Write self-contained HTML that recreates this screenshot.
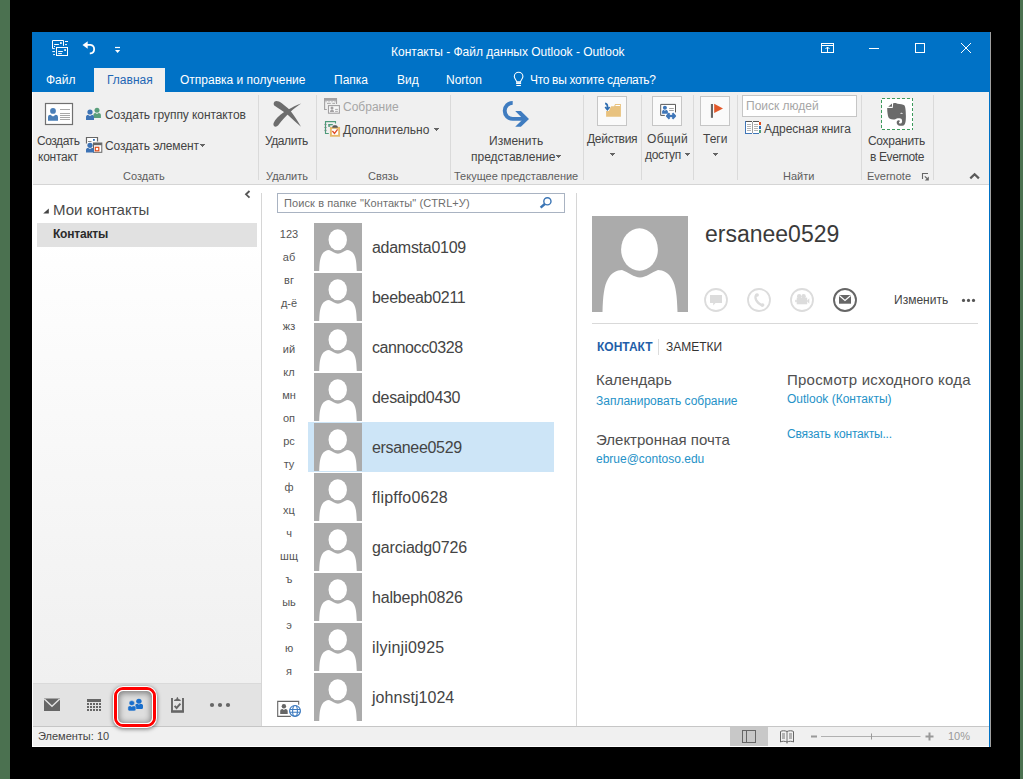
<!DOCTYPE html>
<html><head><meta charset="utf-8">
<style>
*{margin:0;padding:0;box-sizing:border-box}
html,body{width:1023px;height:779px;overflow:hidden;background:#000;font-family:"Liberation Sans",sans-serif;color:#444}
.a{position:absolute}
.t{position:absolute;white-space:nowrap;line-height:1}
svg{position:absolute;overflow:visible}
.gl{font-size:11px;color:#5e5e5e}
.rt{font-size:12px;color:#444}
.rtd{color:#a6a6a6}
.bx{width:30px;height:30px;border:1px solid #c6c6c6;background:#fafafa}
.nm{font-size:16px;color:#444}
.ix{font-size:11px;color:#555;width:40px;text-align:center}
.lk{font-size:12px;color:#2592c8}
#win{position:absolute;left:32px;top:32px;width:959px;height:715px;background:#fff}
</style></head><body>
<div class="a" style="left:0;top:0;width:10px;height:779px;background:#4b7150"></div>
<div class="a" style="left:1020px;top:0;width:3px;height:779px;background:#4b7150"></div>

<!-- window -->
<div class="a" style="left:32px;top:32px;width:958px;height:715px;background:#fff"></div>
<!-- title bar + tabs -->
<div class="a" style="left:32px;top:32px;width:958px;height:60px;background:#0072c6"></div>
<div class="a" style="left:989px;top:32px;width:1px;height:715px;background:#0072c6"></div>
<div class="a" style="left:990px;top:32px;width:1px;height:715px;background:#a0a0a0"></div>

<!-- QAT icons -->
<svg style="left:48px;top:36px" width="24" height="24" viewBox="0 0 24 24" fill="none" stroke="#fff" stroke-width="1">
<path d="M6.8,12.6 H4.5 V4.5 H15.5 V9.9"/>
<rect x="12" y="6.2" width="1.8" height="1.7" fill="#fff" stroke="none"/>
<path d="M6.2,8.5 H10.9 M6,10.5 H7 M17,5.5 H20 M17,8.6 H19 M4.3,15.6 H7 M5.1,18.6 H7"/>
<rect x="8.5" y="11.5" width="11" height="8" />
<rect x="16.2" y="13.2" width="1.8" height="1.7" fill="#fff" stroke="none"/>
<path d="M10.2,15.5 H14.8 M10.2,17.6 H13.9"/>
</svg>
<svg style="left:76px;top:36px" width="48" height="24" viewBox="0 0 48 24" fill="none" stroke="#fff">
<path d="M8,8.9 H14.5 A4.3,4.3 0 0 1 14.5,17.4 H13.8" stroke-width="1.8"/>
<path d="M11.7,5.2 L6.5,8.9 L11.7,12.7 Z" fill="#fff" stroke="none"/>
<path d="M39,11.5 H44" stroke-width="1.2"/>
<path d="M39,14 H44.2 L41.6,16.9 Z" fill="#fff" stroke="none"/>
</svg>

<div class="t" style="left:391px;top:46px;font-size:12px;color:#fff">Контакты - Файл данных Outlook - Outlook</div>

<!-- window controls -->
<svg style="left:815px;top:38px" width="170" height="20" viewBox="0 0 170 20" fill="none" stroke="#fff" stroke-width="1">
<rect x="6.5" y="5.5" width="12" height="9"/>
<path d="M6.5,7.5 H18.5 M12.5,9 V14 M10.5,11 L12.5,9 L14.5,11"/>
<path d="M54,10.5 H64"/>
<rect x="100.5" y="5.5" width="9" height="9"/>
<path d="M146,5 L156,15 M156,5 L146,15"/>
</svg>

<!-- tabs -->
<div class="a" style="left:94px;top:68px;width:71px;height:24px;background:#f0f0f0"></div>
<div class="t" style="left:46px;top:74px;font-size:12px;color:#fff">Файл</div>
<div class="t" style="left:107px;top:74px;font-size:12px;color:#1e66b4">Главная</div>
<div class="t" style="left:180px;top:74px;font-size:12px;color:#fff">Отправка и получение</div>
<div class="t" style="left:334px;top:74px;font-size:12px;color:#fff">Папка</div>
<div class="t" style="left:397px;top:74px;font-size:12px;color:#fff">Вид</div>
<div class="t" style="left:446px;top:74px;font-size:12px;color:#fff">Norton</div>
<svg style="left:510px;top:70px" width="16" height="18" viewBox="0 0 16 18" fill="none" stroke="#fff" stroke-width="1.1">
<path d="M6.8,11.9 C6.6,10.2 4.3,8.8 4.3,6.6 A4.3,4.3 0 0 1 12.9,6.6 C12.9,8.8 10.6,10.2 10.4,11.9 Z"/>
<rect x="6.1" y="12.3" width="5" height="1.7" fill="#fff" stroke="none"/>
<path d="M6.3,15.5 H10.9"/>
</svg>
<div class="t" style="left:530px;top:74px;font-size:12px;color:#fff;letter-spacing:-0.32px">Что вы хотите сделать?</div>

<!-- ribbon -->
<div class="a" style="left:33px;top:92px;width:956px;height:92px;background:#f0f0f0"></div>
<div class="a" style="left:33px;top:184px;width:956px;height:1px;background:#d5d5d5"></div>


<!-- group separators -->
<div class="a" style="left:258px;top:95px;width:1px;height:85px;background:#dadada"></div>
<div class="a" style="left:316px;top:95px;width:1px;height:85px;background:#dadada"></div>
<div class="a" style="left:450px;top:95px;width:1px;height:85px;background:#dadada"></div>
<div class="a" style="left:583px;top:95px;width:1px;height:85px;background:#dadada"></div>
<div class="a" style="left:641px;top:95px;width:1px;height:85px;background:#dadada"></div>
<div class="a" style="left:693px;top:95px;width:1px;height:85px;background:#dadada"></div>
<div class="a" style="left:737px;top:95px;width:1px;height:85px;background:#dadada"></div>
<div class="a" style="left:861px;top:95px;width:1px;height:85px;background:#dadada"></div>
<div class="a" style="left:933px;top:95px;width:1px;height:85px;background:#dadada"></div>

<!-- group labels -->
<div class="t gl" style="left:123px;top:171px">Создать</div>
<div class="t gl" style="left:266px;top:171px">Удалить</div>
<div class="t gl" style="left:368px;top:171px">Связь</div>
<div class="t gl" style="left:454px;top:171px">Текущее представление</div>
<div class="t gl" style="left:783px;top:171px">Найти</div>
<div class="t gl" style="left:867px;top:171px">Evernote</div>

<!-- Создать group -->
<svg style="left:44px;top:102px" width="30" height="24" viewBox="0 0 30 24">
<rect x="1.5" y="1.5" width="27" height="21" fill="#fff" stroke="#707070" stroke-width="1.2"/>
<circle cx="9" cy="8.9" r="2.9" fill="#4a7fb8"/>
<path d="M4,18.7 V15.3 C4,13.6 5,12.8 6.3,12.8 L9,14.6 L11.7,12.8 C13,12.8 14,13.6 14,15.3 V18.7 Z" fill="#4a7fb8"/>
<path d="M16,7.5 H26 M16,11.5 H26 M16,13.5 H26 M16,15.5 H26 M16,17.5 H26" stroke="#a8a8a8" stroke-width="1"/>
</svg>
<div class="t rt" style="left:37px;top:135px;letter-spacing:-0.45px">Создать</div>
<div class="t rt" style="left:38px;top:151px;letter-spacing:-0.25px">контакт</div>

<svg style="left:82px;top:102px" width="24" height="24" viewBox="0 0 24 24">
<circle cx="15" cy="8.2" r="2.5" fill="#5a9e7a"/>
<path d="M11.4,15.9 V13 C11.4,11.6 12.3,10.9 13.3,10.9 L15,12 L16.7,10.9 C17.8,10.9 18.9,11.6 18.9,13 V15.9 Z" fill="#5a9e7a"/>
<circle cx="8" cy="10" r="2.6" fill="#3d73b5"/>
<path d="M4,17.9 V14.9 C4,13.5 5,12.9 6.1,12.9 L8,14 L9.9,12.9 C11,12.9 12,13.5 12,14.9 V17.9 Z" fill="#3d73b5"/>
</svg>
<div class="t rt" style="left:105px;top:109px;letter-spacing:-0.08px">Создать группу контактов</div>

<svg style="left:82px;top:133px" width="24" height="24" viewBox="0 0 24 24">
<path d="M4.5,10.5 V4.5 H15.5 V8.5" fill="#fff" stroke="#666" stroke-width="1.2"/>
<rect x="11" y="6" width="1.8" height="1.8" fill="#2d6db5"/>
<path d="M6,8.5 H9.5" stroke="#888" stroke-width="1"/>
<rect x="11.5" y="10" width="8.3" height="9.3" fill="#fff" stroke="#666" stroke-width="1"/>
<rect x="11.5" y="10" width="8.3" height="2.2" fill="#666"/>
<rect x="13.3" y="14.3" width="3.5" height="3.5" fill="none" stroke="#e04e1b" stroke-width="1.2"/>
<circle cx="8" cy="12.3" r="2.6" fill="#3d73b5"/>
<path d="M4,19.6 V16.9 C4,15.6 5,15 6.1,15 L8,16 L9.9,15 C11,15 12,15.6 12,16.9 V19.6 Z" fill="#3d73b5"/>
</svg>
<div class="t rt" style="left:105px;top:140px;letter-spacing:-0.1px">Создать элемент</div>
<svg style="left:200px;top:144px" width="5" height="3" viewBox="0 0 5 3" shape-rendering="crispEdges"><path d="M0,0 H5 V1 H4 V2 H3 V3 H2 V2 H1 V1 H0 Z" fill="#646464"/></svg>

<!-- Удалить -->
<svg style="left:268px;top:96px" width="38" height="36" viewBox="0 0 38 36">
<path d="M8.5,4.9 C11.5,4.9 16,8.5 20,12.3 C23,15 28,22 33,30.8 C29,27.5 24,22.5 19.4,18.5 C15,15 10,12 7,10 C4.8,8.5 5.5,4.9 8.5,4.9 Z" fill="#6d6d6d"/>
<path d="M33.2,7.5 C28.5,9 24,11.5 20.3,13.6 L15.8,16.2 C11,19.5 7,23.5 5.6,27 C4.8,29.5 6.5,31 8.3,30.6 C9.3,30.3 10,29.5 11,28.2 C14,24.5 17.5,20.5 22.8,15.5 C26,12.5 30,9.5 33.2,7.5 Z" fill="#6d6d6d"/>
</svg>
<div class="t rt" style="left:265px;top:135px;letter-spacing:-0.43px">Удалить</div>

<!-- Связь -->
<svg style="left:320px;top:94px" width="24" height="24" viewBox="0 0 24 24" fill="none">
<path d="M6.8,15.5 H4.6 V4.5 H16.5 V9.9" stroke="#a3a1a3" stroke-width="1.1"/>
<rect x="4.1" y="4" width="12.9" height="2.8" fill="#a3a1a3"/>
<path d="M5.5,7.7 H6.5 M8.5,7.7 H9.5 M11.5,7.7 H12.5 M14.5,7.7 H15.5 M7,9.4 H10.8 M12.3,9.4 H15" stroke="#a3a1a3" stroke-width="0.9"/>
<rect x="8.5" y="11.6" width="10.9" height="7.6" fill="#f8f8f8" stroke="#a3a1a3" stroke-width="1.1"/>
<circle cx="12" cy="14" r="1.5" fill="#a3a1a3"/>
<path d="M10,18 C10,16.3 10.8,15.8 12,15.8 C13.2,15.8 14,16.3 14,18 Z" fill="#a3a1a3"/>
<path d="M15.1,15.4 H17.9 M15.1,17.4 H17.9" stroke="#a3a1a3" stroke-width="0.9"/>
</svg>
<svg style="left:320px;top:117px" width="24" height="24" viewBox="0 0 24 24" fill="none">
<path d="M8.8,16.5 H5.5 V4.6 H15.5 V6.6" stroke="#4f9b7a" stroke-width="1.1"/>
<path d="M4.2,7.4 H6.8 M4.2,10.5 H6.8 M4.2,13.4 H6.8" stroke="#9a9a9a" stroke-width="0.9" stroke-dasharray="0.9 0.8"/>
<path d="M5.5,6.8 V15" stroke="#4f9b7a" stroke-width="1.1"/>
<rect x="8.2" y="7" width="4.6" height="1.3" fill="#4f9b7a"/>
<rect x="8.2" y="8.2" width="2" height="1.6" fill="#4f9b7a"/>
<rect x="10.9" y="10.9" width="8.2" height="7.9" fill="#fff" stroke="#e6b96a" stroke-width="1.9"/>
<path d="M12.2,10.8 C12.2,8.6 13.5,8.2 15,8.2 C16.5,8.2 17.9,8.6 17.9,10.8 Z" fill="#5a5a5a"/>
<path d="M12.4,14 L14.5,16.4 L17.6,12.3" stroke="#e04b25" stroke-width="1.3"/>
</svg>
<div class="t rt rtd" style="left:343px;top:101px">Собрание</div>
<div class="t rt" style="left:343px;top:124px">Дополнительно</div>
<svg style="left:434px;top:128px" width="5" height="3" viewBox="0 0 5 3" shape-rendering="crispEdges"><path d="M0,0 H5 V1 H4 V2 H3 V3 H2 V2 H1 V1 H0 Z" fill="#646464"/></svg>

<!-- Текущее представление -->
<svg style="left:496px;top:96px" width="40" height="36" viewBox="0 0 40 36">
<path d="M16.7,6.85 A7.95,7.95 0 0 0 16.7,22.85 L27,22.85" fill="none" stroke="#3f7cc0" stroke-width="3.9"/>
<path d="M19.2,15 L24.9,15 L33,22.9 L24.9,30.7 L19.2,30.7 L27.1,22.9 Z" fill="#3f7cc0"/>
</svg>
<div class="t rt" style="left:489px;top:135px">Изменить</div>
<div class="t rt" style="left:471px;top:151px">представление</div>
<svg style="left:556px;top:155px" width="5" height="3" viewBox="0 0 5 3" shape-rendering="crispEdges"><path d="M0,0 H5 V1 H4 V2 H3 V3 H2 V2 H1 V1 H0 Z" fill="#646464"/></svg>

<!-- Действия / Общий доступ / Теги -->
<div class="a bx" style="left:597px;top:96px"></div>
<svg style="left:597px;top:96px" width="30" height="30" viewBox="0 0 30 30">
<path d="M9.1,20.8 V15 H11.9 L14.1,10.2 H17.1 L18.1,7.9 H23.9 V20.8 Z" fill="#e8c27f"/>
<path d="M18.5,9.5 H23" stroke="#fff" stroke-width="1"/>
<path d="M8.1,7.3 C9.6,7.5 10.4,8.6 10.4,10.3 V12.8" fill="none" stroke="#2f6db0" stroke-width="1.7"/>
<path d="M8.2,11 L10.4,13.6 L12.6,11" fill="none" stroke="#2f6db0" stroke-width="1.7"/>
</svg>
<div class="t rt" style="left:587px;top:133px;letter-spacing:-0.28px">Действия</div>
<svg style="left:610px;top:153px" width="5" height="3" viewBox="0 0 5 3" shape-rendering="crispEdges"><path d="M0,0 H5 V1 H4 V2 H3 V3 H2 V2 H1 V1 H0 Z" fill="#646464"/></svg>

<div class="a bx" style="left:652px;top:96px"></div>
<svg style="left:656px;top:100px" width="24" height="22" viewBox="0 0 24 22">
<path d="M8.8,15.4 H4.7 V4.4 H19.5 V12.4" fill="#fff" stroke="#5a5a5a" stroke-width="1"/>
<path d="M13.1,8.5 H17.8 M13.1,10.5 H17.8" stroke="#9a9a9a" stroke-width="0.9"/>
<circle cx="8.9" cy="7.8" r="2" fill="#3f76b8"/>
<path d="M6.1,13.8 V11.6 C6.1,10.5 6.9,9.9 7.8,9.9 L8.9,10.7 L10,9.9 C11,9.9 11.9,10.5 11.9,11.6 V13.8 Z" fill="#3f76b8"/>
<path d="M12,16 H18" stroke="#3f76b8" stroke-width="2.2"/>
<path d="M13.6,13.3 L11,16 L13.6,18.7 M16.4,13.3 L19,16 L16.4,18.7" fill="none" stroke="#3f76b8" stroke-width="2.2" stroke-linejoin="round"/>
</svg>
<div class="t rt" style="left:647px;top:133px;letter-spacing:0.3px">Общий</div>
<div class="t rt" style="left:645px;top:149px;letter-spacing:-0.3px">доступ</div>
<svg style="left:685px;top:153px" width="5" height="3" viewBox="0 0 5 3" shape-rendering="crispEdges"><path d="M0,0 H5 V1 H4 V2 H3 V3 H2 V2 H1 V1 H0 Z" fill="#646464"/></svg>

<div class="a bx" style="left:700px;top:96px"></div>
<svg style="left:700px;top:96px" width="30" height="30" viewBox="0 0 30 30">
<rect x="10.9" y="8" width="2.1" height="13.8" fill="#666"/>
<path d="M14.2,7.8 L23,12.5 L14.2,17 Z" fill="#e2582a"/>
</svg>
<div class="t rt" style="left:703px;top:133px">Теги</div>
<svg style="left:713px;top:153px" width="5" height="3" viewBox="0 0 5 3" shape-rendering="crispEdges"><path d="M0,0 H5 V1 H4 V2 H3 V3 H2 V2 H1 V1 H0 Z" fill="#646464"/></svg>

<!-- Найти -->
<div class="a" style="left:742px;top:95px;width:115px;height:22px;background:#fff;border:1px solid #c6c6c6"></div>
<div class="t rt" style="left:746px;top:100px;color:#a6a6a6">Поиск людей</div>
<svg style="left:740px;top:116px" width="26" height="22" viewBox="0 0 26 22" shape-rendering="crispEdges">
<rect x="6" y="6" width="6" height="11" fill="#fff"/><rect x="13" y="6" width="6" height="11" fill="#fff"/>
<rect x="5" y="5" width="7" height="1" fill="#555"/><rect x="13" y="5" width="6" height="1" fill="#555"/>
<rect x="5" y="5" width="1" height="13" fill="#3f76b8"/>
<rect x="5" y="17" width="7" height="1" fill="#3f76b8"/><rect x="13" y="17" width="6" height="1" fill="#3f76b8"/>
<rect x="12" y="6" width="1" height="11" fill="#a0a0a0"/>
<g fill="#b4b4b4"><rect x="7" y="8" width="4" height="1"/><rect x="7" y="10" width="4" height="1"/><rect x="7" y="12" width="4" height="1"/><rect x="7" y="14" width="4" height="1"/>
<rect x="14" y="8" width="4" height="1"/><rect x="14" y="10" width="4" height="1"/><rect x="14" y="12" width="4" height="1"/><rect x="14" y="14" width="4" height="1"/></g>
<rect x="19" y="6" width="2" height="3" fill="#e04a1a"/>
<rect x="19" y="10" width="2" height="3" fill="#2f6db5"/>
<rect x="19" y="14" width="2" height="3" fill="#4a9a78"/>
</svg>
<div class="t rt" style="left:764px;top:123px">Адресная книга</div>

<!-- Evernote -->
<svg style="left:876px;top:94px" width="42" height="40" viewBox="0 0 42 40">
<rect x="5.5" y="4.5" width="31" height="31" fill="#fff" stroke="#3c9a5c" stroke-width="1" stroke-dasharray="3 2" shape-rendering="crispEdges"/>
<path d="M12.2,12.8 L16,9.6 V12.8 Z" fill="#6a6a6a"/>
<path d="M11.2,14 H16.7 L17.2,9.3 C18,8.8 20.5,8.8 21.5,9.7 C24,10.3 27.2,10.2 28.3,11.2 C29.5,12.5 29.9,17 29.9,22 C29.9,27 29.5,30.5 27.5,31.5 C25,32.3 21.8,31.8 21,30 C20.3,28 20.8,26.5 22.3,26.2 C23.8,26 24.3,27.2 23.5,27.7 C22.5,28 22.8,29.6 24.5,29.6 C26,29.5 26.5,27.5 25.8,25.5 C25,24 22,24.3 20.8,24.5 C20,25 19,25.5 17.3,25.5 C14.8,25.5 12.5,24.7 12,22 C11.3,18.5 11.2,16 11.2,14 Z" fill="#6a6a6a"/>
<path d="M24.2,19.8 C24.5,18.3 26.5,18.3 26.9,19.8 Z" fill="#fff"/>
</svg>
<div class="t rt" style="left:868px;top:135px;letter-spacing:-0.3px">Сохранить</div>
<div class="t rt" style="left:870px;top:151px;letter-spacing:-0.37px">в Evernote</div>
<svg style="left:920px;top:172px" width="10" height="10" viewBox="0 0 10 10">
<path d="M8,1.5 H2.5 V7" fill="none" stroke="#666" stroke-width="1.1"/>
<path d="M4.8,4.3 L7.2,6.7" stroke="#666" stroke-width="1.2"/>
<path d="M8.8,4.6 V8.6 H4.8 Z" fill="#666"/>
</svg>
<svg style="left:968px;top:172px" width="13" height="9" viewBox="0 0 13 9"><path d="M2.3,6.4 L6.6,2.2 L10.9,6.4" fill="none" stroke="#5a5a5a" stroke-width="2.2"/></svg>


<!--BODY-->
<div class="a" style="left:33px;top:185px;width:228px;height:498px;background:linear-gradient(#fff 0%,#fff 10%,#f0f0f0 100%)"></div>
<div class="a" style="left:261px;top:193px;width:1px;height:533px;background:#d6d6d6"></div>
<div class="a" style="left:576px;top:193px;width:1px;height:533px;background:#d6d6d6"></div>
<svg style="left:243px;top:189px" width="10" height="11" viewBox="0 0 10 11"><path d="M6.5,2 L3,5.3 L6.5,8.6" fill="none" stroke="#555" stroke-width="1.8"/></svg>
<svg style="left:41px;top:207px" width="9" height="8" viewBox="0 0 9 8"><path d="M7.8,1.5 V6.6 H2.2 Z" fill="#444"/></svg>
<div class="t" style="left:53px;top:202px;font-size:15px;color:#4a4a4a">Мои контакты</div>
<div class="a" style="left:37px;top:223px;width:220px;height:24px;background:#e1e1e1"></div>
<div class="t" style="left:53px;top:228px;font-size:12px;font-weight:bold;color:#2a2a2a;letter-spacing:-0.2px">Контакты</div>
<div class="a" style="left:33px;top:683px;width:228px;height:43px;background:#e3e3e3"></div>
<div class="a" style="left:33px;top:683px;width:228px;height:1px;background:#dadada"></div>
<div class="a" style="left:33px;top:726px;width:956px;height:1px;background:#c6c6c6"></div>
<div class="a" style="left:33px;top:727px;width:956px;height:19px;background:#f0f0f0"></div>
<div class="t" style="left:38px;top:731px;font-size:11px;color:#444">Элементы: 10</div>
<div class="a" style="left:277px;top:193px;width:288px;height:20px;border:1px solid #a9b3c2;background:#fff"></div>
<div class="t" style="left:284px;top:198px;font-size:11px;color:#6d6d6d;letter-spacing:0.1px">Поиск в папке "Контакты" (CTRL+У)</div>
<svg style="left:536px;top:195px" width="16" height="16" viewBox="0 0 16 16" fill="none"><circle cx="11.4" cy="6.3" r="3.6" stroke="#3b75b5" stroke-width="1.4"/><path d="M8.8,9 L4.6,12.6" stroke="#3b75b5" stroke-width="2.4"/></svg>
<div class="a" style="left:308px;top:422px;width:246px;height:50px;background:#cde5f7"></div>
<svg style="left:314px;top:223px" width="48" height="48" viewBox="0 0 96 96"><rect width="96" height="96" fill="#ababab"/><ellipse cx="47.5" cy="33.5" rx="18.4" ry="21.2" fill="#fff"/><path d="M10.5,96 C11,80 12,70 16,63 C19,57 25,54 30,54 C36,56 42,61.5 48,61.5 C54,61.5 60,56 66,54 C71,54 77,57 80,63 C84,70 85,80 85.5,96 Z" fill="#fff"/></svg>
<div class="t nm" style="left:372px;top:240px;letter-spacing:-0.28px">adamsta0109</div>
<svg style="left:314px;top:273px" width="48" height="48" viewBox="0 0 96 96"><rect width="96" height="96" fill="#ababab"/><ellipse cx="47.5" cy="33.5" rx="18.4" ry="21.2" fill="#fff"/><path d="M10.5,96 C11,80 12,70 16,63 C19,57 25,54 30,54 C36,56 42,61.5 48,61.5 C54,61.5 60,56 66,54 C71,54 77,57 80,63 C84,70 85,80 85.5,96 Z" fill="#fff"/></svg>
<div class="t nm" style="left:372px;top:290px;letter-spacing:-0.3px">beebeab0211</div>
<svg style="left:314px;top:323px" width="48" height="48" viewBox="0 0 96 96"><rect width="96" height="96" fill="#ababab"/><ellipse cx="47.5" cy="33.5" rx="18.4" ry="21.2" fill="#fff"/><path d="M10.5,96 C11,80 12,70 16,63 C19,57 25,54 30,54 C36,56 42,61.5 48,61.5 C54,61.5 60,56 66,54 C71,54 77,57 80,63 C84,70 85,80 85.5,96 Z" fill="#fff"/></svg>
<div class="t nm" style="left:372px;top:340px;letter-spacing:-0.4px">cannocc0328</div>
<svg style="left:314px;top:373px" width="48" height="48" viewBox="0 0 96 96"><rect width="96" height="96" fill="#ababab"/><ellipse cx="47.5" cy="33.5" rx="18.4" ry="21.2" fill="#fff"/><path d="M10.5,96 C11,80 12,70 16,63 C19,57 25,54 30,54 C36,56 42,61.5 48,61.5 C54,61.5 60,56 66,54 C71,54 77,57 80,63 C84,70 85,80 85.5,96 Z" fill="#fff"/></svg>
<div class="t nm" style="left:372px;top:390px;letter-spacing:-0.32px">desaipd0430</div>
<svg style="left:314px;top:423px" width="48" height="48" viewBox="0 0 96 96"><rect width="96" height="96" fill="#ababab"/><ellipse cx="47.5" cy="33.5" rx="18.4" ry="21.2" fill="#fff"/><path d="M10.5,96 C11,80 12,70 16,63 C19,57 25,54 30,54 C36,56 42,61.5 48,61.5 C54,61.5 60,56 66,54 C71,54 77,57 80,63 C84,70 85,80 85.5,96 Z" fill="#fff"/></svg>
<div class="t nm" style="left:372px;top:440px;letter-spacing:-0.33px">ersanee0529</div>
<svg style="left:314px;top:473px" width="48" height="48" viewBox="0 0 96 96"><rect width="96" height="96" fill="#ababab"/><ellipse cx="47.5" cy="33.5" rx="18.4" ry="21.2" fill="#fff"/><path d="M10.5,96 C11,80 12,70 16,63 C19,57 25,54 30,54 C36,56 42,61.5 48,61.5 C54,61.5 60,56 66,54 C71,54 77,57 80,63 C84,70 85,80 85.5,96 Z" fill="#fff"/></svg>
<div class="t nm" style="left:372px;top:490px;letter-spacing:0.22px">flipffo0628</div>
<svg style="left:314px;top:523px" width="48" height="48" viewBox="0 0 96 96"><rect width="96" height="96" fill="#ababab"/><ellipse cx="47.5" cy="33.5" rx="18.4" ry="21.2" fill="#fff"/><path d="M10.5,96 C11,80 12,70 16,63 C19,57 25,54 30,54 C36,56 42,61.5 48,61.5 C54,61.5 60,56 66,54 C71,54 77,57 80,63 C84,70 85,80 85.5,96 Z" fill="#fff"/></svg>
<div class="t nm" style="left:372px;top:540px;letter-spacing:-0.16px">garciadg0726</div>
<svg style="left:314px;top:573px" width="48" height="48" viewBox="0 0 96 96"><rect width="96" height="96" fill="#ababab"/><ellipse cx="47.5" cy="33.5" rx="18.4" ry="21.2" fill="#fff"/><path d="M10.5,96 C11,80 12,70 16,63 C19,57 25,54 30,54 C36,56 42,61.5 48,61.5 C54,61.5 60,56 66,54 C71,54 77,57 80,63 C84,70 85,80 85.5,96 Z" fill="#fff"/></svg>
<div class="t nm" style="left:372px;top:590px;letter-spacing:-0.17px">halbeph0826</div>
<svg style="left:314px;top:623px" width="48" height="48" viewBox="0 0 96 96"><rect width="96" height="96" fill="#ababab"/><ellipse cx="47.5" cy="33.5" rx="18.4" ry="21.2" fill="#fff"/><path d="M10.5,96 C11,80 12,70 16,63 C19,57 25,54 30,54 C36,56 42,61.5 48,61.5 C54,61.5 60,56 66,54 C71,54 77,57 80,63 C84,70 85,80 85.5,96 Z" fill="#fff"/></svg>
<div class="t nm" style="left:372px;top:640px;letter-spacing:0.19px">ilyinji0925</div>
<svg style="left:314px;top:673px" width="48" height="48" viewBox="0 0 96 96"><rect width="96" height="96" fill="#ababab"/><ellipse cx="47.5" cy="33.5" rx="18.4" ry="21.2" fill="#fff"/><path d="M10.5,96 C11,80 12,70 16,63 C19,57 25,54 30,54 C36,56 42,61.5 48,61.5 C54,61.5 60,56 66,54 C71,54 77,57 80,63 C84,70 85,80 85.5,96 Z" fill="#fff"/></svg>
<div class="t nm" style="left:372px;top:690px;letter-spacing:0.04px">johnstj1024</div>
<div class="t ix" style="left:269px;top:229px">123</div>
<div class="t ix" style="left:269px;top:252px">аб</div>
<div class="t ix" style="left:269px;top:275px">вг</div>
<div class="t ix" style="left:269px;top:298px">д-ё</div>
<div class="t ix" style="left:269px;top:321px">жз</div>
<div class="t ix" style="left:269px;top:344px">ий</div>
<div class="t ix" style="left:269px;top:367px">кл</div>
<div class="t ix" style="left:269px;top:390px">мн</div>
<div class="t ix" style="left:269px;top:413px">оп</div>
<div class="t ix" style="left:269px;top:436px">рс</div>
<div class="t ix" style="left:269px;top:459px">ту</div>
<div class="t ix" style="left:269px;top:482px">ф</div>
<div class="t ix" style="left:269px;top:505px">хц</div>
<div class="t ix" style="left:269px;top:528px">ч</div>
<div class="t ix" style="left:269px;top:551px">шщ</div>
<div class="t ix" style="left:269px;top:574px">ъ</div>
<div class="t ix" style="left:269px;top:597px">ыь</div>
<div class="t ix" style="left:269px;top:620px">э</div>
<div class="t ix" style="left:269px;top:643px">ю</div>
<div class="t ix" style="left:269px;top:666px">я</div>
<svg style="left:272px;top:694px" width="34" height="28" viewBox="0 0 34 28">
<path d="M18.8,22.4 H5.7 V7.4 H26.7 V10.7" fill="none" stroke="#666" stroke-width="1.1"/>
<circle cx="11.9" cy="12.2" r="2.2" fill="#666"/>
<path d="M8.2,20 V17.3 C8.2,15.9 9.3,15 10.5,15 L11.9,16.1 L13.3,15 C14.6,15 15.7,15.9 15.7,17.3 V20 Z" fill="#666"/>
<circle cx="23" cy="16.9" r="5.4" fill="#fff" stroke="#3f7cc0" stroke-width="1.2"/>
<ellipse cx="23" cy="16.9" rx="2.4" ry="5.4" fill="none" stroke="#3f7cc0" stroke-width="1.1"/>
<path d="M17.8,15.5 H28.2 M17.8,18.3 H28.2" stroke="#3f7cc0" stroke-width="1.1"/>
</svg>

<svg style="left:592px;top:216px" width="96" height="96" viewBox="0 0 96 96"><rect width="96" height="96" fill="#ababab"/><ellipse cx="47.5" cy="33.5" rx="18.4" ry="21.2" fill="#fff"/><path d="M10.5,96 C11,80 12,70 16,63 C19,57 25,54 30,54 C36,56 42,61.5 48,61.5 C54,61.5 60,56 66,54 C71,54 77,57 80,63 C84,70 85,80 85.5,96 Z" fill="#fff"/></svg>
<div class="t" style="left:705px;top:223px;font-size:23px;color:#3a3a3a">ersanee0529</div>
<svg style="left:700px;top:284px" width="165" height="32" viewBox="0 0 165 32" fill="none">
<circle cx="16" cy="16" r="11" stroke="#dcdcdc" stroke-width="1.8"/>
<path d="M10,10.9 H22 V19 H15.5 L13.2,21.5 V19 H10 Z" fill="#dcdcdc"/>
<circle cx="59" cy="16" r="11" stroke="#dcdcdc" stroke-width="1.8"/>
<path d="M56.3,10.8 C54.3,13.5 55.8,18.5 62.3,21.6" stroke="#dcdcdc" stroke-width="2.3" stroke-linecap="round"/><circle cx="57.2" cy="11" r="1.7" fill="#dcdcdc"/><circle cx="62.6" cy="21" r="1.8" fill="#dcdcdc"/>
<circle cx="102" cy="16" r="11" stroke="#dcdcdc" stroke-width="1.8"/>
<circle cx="99.2" cy="12.3" r="2.2" fill="#dcdcdc"/><circle cx="103.6" cy="12.3" r="2.2" fill="#dcdcdc"/>
<rect x="96.7" y="13.6" width="10.5" height="6.7" fill="#dcdcdc"/>
<rect x="95.2" y="15.8" width="1.6" height="2.4" fill="#dcdcdc"/>
<path d="M106.8,17 L109.3,14.3 V19.8 Z" fill="#dcdcdc"/>
<circle cx="145" cy="16" r="11" stroke="#666" stroke-width="1.9"/>
<rect x="139" y="11" width="12" height="8.7" fill="#666"/>
<path d="M139.3,11.5 L145,16.5 L150.7,11.5" stroke="#fff" stroke-width="1.1"/>
</svg>
<div class="t" style="left:894px;top:294px;font-size:12px;color:#444">Изменить</div>
<svg style="left:960px;top:297px" width="18" height="6" viewBox="0 0 18 6"><circle cx="3.5" cy="3.4" r="1.6" fill="#555"/><circle cx="8.5" cy="3.4" r="1.6" fill="#555"/><circle cx="13.5" cy="3.4" r="1.6" fill="#555"/></svg>
<div class="a" style="left:592px;top:323px;width:386px;height:1px;background:#d9d9d9"></div>
<div class="t" style="left:597px;top:341px;font-size:12px;font-weight:bold;color:#1e5ea8">КОНТАКТ</div>
<div class="a" style="left:658px;top:339px;width:1px;height:16px;background:#dcdcdc"></div>
<div class="t" style="left:666px;top:341px;font-size:12px;color:#333">ЗАМЕТКИ</div>
<div class="t" style="left:596px;top:372px;font-size:15px;color:#505050">Календарь</div>
<div class="t lk" style="left:596px;top:395px">Запланировать собрание</div>
<div class="t" style="left:596px;top:432px;font-size:15px;color:#505050">Электронная почта</div>
<div class="t lk" style="left:596px;top:453px">ebrue@contoso.edu</div>
<div class="t" style="left:787px;top:372px;font-size:15px;color:#505050;letter-spacing:0.22px">Просмотр исходного кода</div>
<div class="t lk" style="left:787px;top:393px">Outlook (Контакты)</div>
<div class="t lk" style="left:787px;top:428px;letter-spacing:-0.2px">Связать контакты...</div>


<svg style="left:40px;top:694px" width="200" height="22" viewBox="0 0 200 22">
<path d="M4,4.5 H20 V17 H4 Z" fill="#666"/>
<path d="M4.3,5 L12,12.3 L19.7,5" fill="none" stroke="#e3e3e3" stroke-width="1.4"/>
</svg>
<svg style="left:87px;top:699px" width="14" height="12" viewBox="0 0 14 12" shape-rendering="crispEdges" fill="#666"><rect x="0" y="0" width="14" height="3"/><rect x="0" y="4" width="2" height="2"/><rect x="3" y="4" width="2" height="2"/><rect x="6" y="4" width="2" height="2"/><rect x="9" y="4" width="2" height="2"/><rect x="12" y="4" width="2" height="2"/><rect x="0" y="7" width="2" height="2"/><rect x="3" y="7" width="2" height="2"/><rect x="6" y="7" width="2" height="2"/><rect x="9" y="7" width="2" height="2"/><rect x="12" y="7" width="2" height="2"/><rect x="0" y="10" width="2" height="2"/><rect x="3" y="10" width="2" height="2"/><rect x="6" y="10" width="2" height="2"/><rect x="9" y="10" width="2" height="2"/><rect x="12" y="10" width="2" height="2"/></svg>
<div class="a" style="left:113px;top:686px;width:44px;height:42px;border-radius:10px;background:#fff;box-shadow:0 1px 4px rgba(0,0,0,0.55)"></div>
<div class="a" style="left:114px;top:687px;width:42px;height:40px;border-radius:9px;border:3px solid #f00"></div>
<div class="a" style="left:117px;top:690px;width:36px;height:34px;border-radius:6px;border:1px solid #fff;background:#dedede;box-shadow:inset 0 1px 6px 1px rgba(0,0,0,0.45)"></div>
<svg style="left:124px;top:694px" width="24" height="20" viewBox="0 0 24 20">
<ellipse cx="14.9" cy="7.3" rx="2.7" ry="2.5" fill="#1a6fcc"/>
<path d="M11.4,10.9 C11.4,10.3 12,9.9 12.8,9.9 L14,9.9 L14.9,10.7 L15.8,9.9 L17,9.9 C18.3,9.9 19,10.5 19,11.6 V13.4 C19,14.4 18.3,14.9 17.3,14.9 H13 C12,14.9 11.4,14.4 11.4,13.4 Z" fill="#1a6fcc"/>
<ellipse cx="7.8" cy="9.1" rx="2.8" ry="2.5" fill="#1a6fcc" stroke="#dedede" stroke-width="0.5"/>
<path d="M3.9,13.5 C3.9,12.6 4.6,11.9 5.6,11.9 L6.9,11.9 L7.8,12.8 L8.7,11.9 L10,11.9 C11.2,11.9 11.9,12.6 11.9,13.5 V15.3 C11.9,16.3 11.2,16.9 10.2,16.9 H5.6 C4.6,16.9 3.9,16.3 3.9,15.3 Z" fill="#1a6fcc" stroke="#dedede" stroke-width="0.5"/>
</svg>
<svg style="left:164px;top:692px" width="26" height="24" viewBox="0 0 26 24">
<path d="M8,6 V19.6 H19 V6" fill="none" stroke="#666" stroke-width="1.9"/>
<rect x="7.1" y="18.3" width="12.8" height="2.3" fill="#666"/>
<path d="M10,8.9 C10,7.6 11.5,7.3 12.3,7 C12.7,5.9 13,5.1 13.4,5.1 C13.8,5.1 14.1,5.9 14.5,7 C15.3,7.3 16.8,7.6 16.8,8.9 Z" fill="#666"/>
<path d="M10.6,13.8 L12.6,16 L16.4,11.7" fill="none" stroke="#666" stroke-width="1.9"/>
</svg>
<svg style="left:206px;top:700px" width="28" height="10" viewBox="0 0 28 10"><circle cx="6" cy="5" r="2.1" fill="#666"/><circle cx="14" cy="5" r="2.1" fill="#666"/><circle cx="22" cy="5" r="2.1" fill="#666"/></svg>

<!-- status bar right -->
<div class="a" style="left:730px;top:727px;width:38px;height:19px;background:#c8c8c8"></div>
<svg style="left:730px;top:727px" width="250" height="19" viewBox="0 0 250 19" fill="none">
<rect x="12.5" y="3.5" width="13" height="12" stroke="#666" stroke-width="1"/>
<path d="M16.5,3.5 V15.5" stroke="#666" stroke-width="1"/>
<path d="M50.5,4.5 C52,3.5 55,3.5 57,4.5 C59,3.5 62,3.5 63.5,4.5 V15 C62,14 59,14 57,15 C55,14 52,14 50.5,15 Z" stroke="#666" stroke-width="1"/>
<path d="M57,4.5 V16.5 M52,7 H55 M52,9 H55 M52,11 H55 M59,7 H62 M59,9 H62 M59,11 H62" stroke="#666" stroke-width="0.9"/>
<path d="M81,9.5 H87" stroke="#999" stroke-width="2"/>
<path d="M91,9.5 H190.5" stroke="#b0b0b0" stroke-width="1"/>
<path d="M141.5,6.5 V12.5" stroke="#999" stroke-width="1"/>
<path d="M195.5,9.5 H203.5 M199.5,5.5 V13.5" stroke="#999" stroke-width="2"/>
</svg>
<div class="t" style="left:948px;top:731px;font-size:11px;color:#999">10%</div>


</body></html>
